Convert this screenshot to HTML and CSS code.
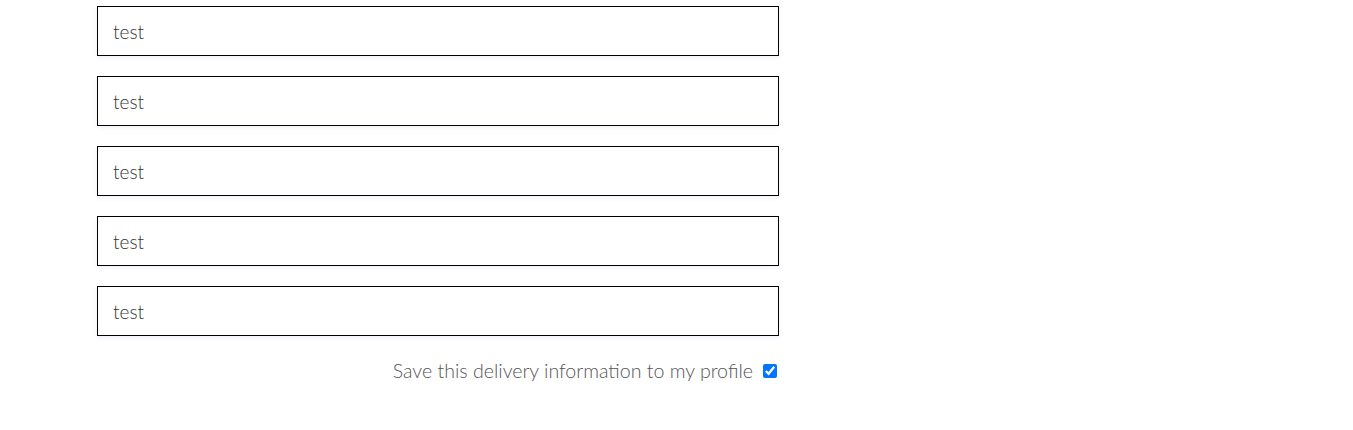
FILE: index.html
```html
<!DOCTYPE html>
<html>
<head>
<meta charset="utf-8">
<link rel="stylesheet" href="styles.css">
</head>
<body>
<form class="form">
  <input class="field" type="text" value="test">
  <input class="field" type="text" value="test">
  <input class="field" type="text" value="test">
  <input class="field" type="text" value="test">
  <input class="field" type="text" value="test">
  <div class="save-row">
    <label class="save-label" for="save">Save this delivery information to my profile</label>
    <input class="save-check" id="save" type="checkbox" checked>
  </div>
</form>
</body>
</html>
```

FILE: styles.css
```css
html, body {
  margin: 0;
  padding: 0;
  background: #fff;
}
body {
  font-family: "Lato Light", Lato, "Liberation Sans", sans-serif;
  font-weight: 300;
}
.form {
  width: 682px;
  margin-left: 97px;
  padding-top: 6px;
  display: flex;
  flex-direction: column;
  gap: 20px;
}
.field {
  box-sizing: border-box;
  width: 682px;
  height: 50px;
  margin: 0;
  border: 1px solid #000;
  border-radius: 0;
  padding: 0 15px;
  font-family: "Lato Light", Lato, "Liberation Sans", sans-serif;
  font-weight: 300;
  font-size: 19px;
  color: #333;
  background: #fff;
  box-shadow: 0 2px 4px rgba(120, 140, 200, 0.12);
  outline: none;
}
.save-row {
  display: flex;
  justify-content: flex-end;
  align-items: center;
  margin-top: 3px;
}
.save-label {
  font-size: 19.6px;
  color: #555;
}
.save-check {
  width: 14px;
  height: 14px;
  margin: 0 2px 0 10px;
}
```
